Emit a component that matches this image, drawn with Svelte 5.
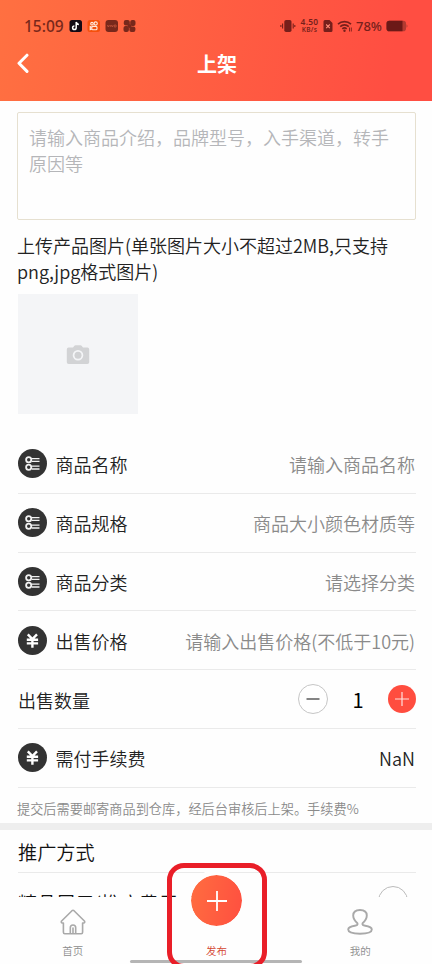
<script>
  let description = '';
  let count = 1;

  const fields = [
    { icon: 'list', label: '商品名称', hint: '请输入商品名称' },
    { icon: 'list', label: '商品规格', hint: '商品大小颜色材质等' },
    { icon: 'list', label: '商品分类', hint: '请选择分类' },
    { icon: 'yen', label: '出售价格', hint: '请输入出售价格(不低于10元)' },
    { label: '出售数量', stepper: true },
    { icon: 'yen', label: '需付手续费', value: 'NaN' },
  ];

  function minus() {
    if (count > 1) count -= 1;
  }
</script>

<div class="page">
  <header>
    <div class="status">
      <span class="time">15:09</span>
      <svg class="apps" width="68" height="14" viewBox="0 0 68 14">
        <rect x="0.5" y="1" width="12.5" height="12" rx="2.5" fill="#120914" />
        <path d="M7.2 3v5.8a1.8 1.8 0 1 1-1.8-1.8M7.2 3c.3 1.6 1.2 2.3 2.7 2.4" fill="none" stroke="#fff" stroke-width="1.5" />
        <rect x="18.5" y="1" width="12.5" height="12" rx="2.5" fill="#f5500c" />
        <g fill="none" stroke="#ffe9dc" stroke-width="1.1">
          <circle cx="23" cy="4.7" r="1.3" />
          <circle cx="26.7" cy="4.5" r="1.6" />
          <rect x="22.8" y="7.4" width="5.2" height="3.4" rx="1" />
          <path d="M22.8 8.3l-1.6-.7v3l1.6-.7" />
        </g>
        <rect x="36.5" y="1" width="12.5" height="12" rx="3" fill="#78281b" />
        <path d="M38.3 6l1 2 1-2M41.3 6v2M42.3 6l1 2 1-2M45.3 6h1.8v2h-1.8z" fill="none" stroke="#c9573c" stroke-width=".7" />
        <g fill="#78281b">
          <rect x="54.8" y="1" width="6" height="5.6" rx="2" />
          <rect x="61.2" y="1" width="5.3" height="6" rx="2" />
          <rect x="54.5" y="7" width="5.4" height="6" rx="2" />
          <rect x="60.4" y="7.5" width="6" height="5.5" rx="2" />
          <circle cx="60.5" cy="7" r="2" />
        </g>
      </svg>
      <div class="indicators">
        <svg width="16" height="14" viewBox="0 0 16 14">
          <rect x="4.3" y="1" width="7.2" height="12" rx="1.8" fill="#761f1b" />
          <path d="M2.6 4.5v5M.9 6v2M13.2 4.5v5M14.8 6v2" stroke="#761f1b" stroke-width="1.1" />
        </svg>
        <span class="speed"><span>4.50</span><span class="unit">KB/s</span></span>
        <svg class="sim" width="10" height="14" viewBox="0 0 10 14">
          <path d="M2 1h4.5L9.5 4v7.5A1.5 1.5 0 0 1 8 13H2A1.5 1.5 0 0 1 .5 11.5v-9A1.5 1.5 0 0 1 2 1z" fill="#761f1b" />
          <path d="M3.2 5.5l3.6 3.6M6.8 5.5L3.2 9.1" stroke="#ff8c78" stroke-width="1.1" />
        </svg>
        <svg class="wifi" width="16" height="14" viewBox="0 0 16 14">
          <g fill="none" stroke="#761f1b" stroke-width="1.6">
            <path d="M1 5.2a9.4 9.4 0 0 1 13 0" />
            <path d="M3.2 7.6a6.2 6.2 0 0 1 8.6 0" />
            <path d="M5.3 9.9a3.2 3.2 0 0 1 4.4 0" />
          </g>
          <circle cx="7.5" cy="11.7" r="1.2" fill="#761f1b" />
          <path d="M12.5 8.5v4M14.3 8.5v4" stroke="#761f1b" stroke-width=".9" />
        </svg>
        <span class="percent">78%</span>
        <svg class="battery" width="22" height="12" viewBox="0 0 22 12">
          <rect x=".5" y=".8" width="19.5" height="10.4" rx="2.8" fill="#b23a31" />
          <path d="M3.3.8H16.5v10.4H3.3A2.8 2.8 0 0 1 .5 8.4V3.6A2.8 2.8 0 0 1 3.3.8z" fill="#6c1917" />
          <path d="M20.5 4.2c1.3.7 1.3 2.9 0 3.6z" fill="#b23a31" />
        </svg>
      </div>
    </div>
    <div class="title-bar">
      <svg class="back" width="14" height="22" viewBox="0 0 14 22">
        <path d="M12 2.2L4 10.2l8 8.2" fill="none" stroke="#fff" stroke-width="3" stroke-linecap="round" stroke-linejoin="round" />
      </svg>
      <h1>上架</h1>
    </div>
  </header>

  <main>
    <textarea bind:value={description} placeholder="请输入商品介绍，品牌型号，入手渠道，转手原因等"></textarea>
    <p class="upload-label">上传产品图片(单张图片大小不超过2MB,只支持png,jpg格式图片)</p>
    <div class="uploader">
      <svg width="24" height="20" viewBox="0 0 24 20">
        <path fill-rule="evenodd" d="M2.6 2.6H7L8.4.7Q8.8.2 9.5.2h5q.7 0 1.1.5L17 2.6h4.4Q23.2 2.6 23.2 4.4v12.9q0 1.8-1.8 1.8H2.6Q.8 19.1.8 17.3V4.4Q.8 2.6 2.6 2.6zM12 4.9a5.3 5.3 0 1 0 0 10.6a5.3 5.3 0 0 0 0-10.6z" fill="#d2d3d5" />
        <circle cx="12" cy="10.2" r="3.5" fill="#d0d1d3" />
      </svg>
    </div>

    <div class="fields">
      {#each fields as field}
        <div class="field">
          {#if field.icon}
            <span class="badge">
              {#if field.icon === 'list'}
                <svg width="29" height="29" viewBox="0 0 29 29" fill="none" stroke="#f2f2f2">
                  <circle cx="10.7" cy="10.8" r="2.6" stroke-width="1.8" />
                  <circle cx="10.7" cy="18.2" r="2.6" stroke-width="1.8" />
                  <path d="M14 9.6h7.5M14 12.4h7.5M14 17.1h7.5M14 20h7.5" stroke-width="1.3" />
                </svg>
              {:else}
                <svg width="29" height="29" viewBox="0 0 29 29" fill="none" stroke="#fff" stroke-width="2.4">
                  <path d="M9.8 8.3l4.6 4.7 4.6-4.7M14.4 12.8v9M8.8 13.7h11.3M8.8 17.4h11.3" />
                </svg>
              {/if}
            </span>
          {/if}
          <span class="label">{field.label}</span>
          {#if field.stepper}
            <div class="stepper">
              <button class="minus" aria-label="minus" on:click={minus}>
                <svg width="14" height="14" viewBox="0 0 14 14"><path d="M.5 7h13" stroke="#333" stroke-width="1.2" /></svg>
              </button>
              <span class="count">{count}</span>
              <button class="plus" aria-label="plus" on:click={() => (count += 1)}>
                <svg width="14" height="14" viewBox="0 0 14 14"><path d="M0 7h14M7 0v14" stroke="#ffe2de" stroke-width="1.2" /></svg>
              </button>
            </div>
          {:else if field.value}
            <span class="value">{field.value}</span>
          {:else}
            <span class="hint">{field.hint}</span>
          {/if}
        </div>
      {/each}
    </div>
    <p class="note">提交后需要邮寄商品到仓库，经后台审核后上架。手续费%</p>
  </main>

  <section>
    <h2>推广方式</h2>
    <div class="option">
      <span>精品展示(推广费用5元)</span>
      <span class="radio"></span>
    </div>
  </section>

  <nav>
    <div class="tab">
      <svg width="28" height="28" viewBox="0 0 28 28" fill="none" stroke="#a9a9a9" stroke-width="1.6" stroke-linecap="round" stroke-linejoin="round">
        <path d="M4.4 15H3.2q-1.5-.6-.6-2L13 2.7q1-.8 2 0L25.4 13q.9 1.4-.6 2h-1.2v9.3q0 1.4-1.4 1.4H5.8q-1.4 0-1.4-1.4z" />
        <path d="M11.3 25.2v-5.5a2.7 2.7 0 0 1 5.4 0v5.5M14 20v5" />
      </svg>
      <span>首页</span>
    </div>
    <div class="tab active">
      <div class="publish">
        <svg width="20" height="20" viewBox="0 0 20 20"><path d="M0 10h20M10 0v20" stroke="#fff" stroke-width="1.8" /></svg>
      </div>
      <span>发布</span>
    </div>
    <div class="tab">
      <svg width="28" height="28" viewBox="0 0 28 28" fill="none" stroke="#a9a9a9" stroke-width="1.9" stroke-linejoin="round">
        <path d="M11.4 15.2C8.3 12.5 7.2 9.8 7.2 7.6C7.2 4 9.7 2 14 2s6.8 2 6.8 5.6c0 2.2-1.1 4.9-4.2 7.6c-.7 1.5.6 2.2 2.6 2.5c4.2.6 6.6 2 6.6 3.9c0 2.7-4.4 4.2-11.8 4.2S2.2 24.3 2.2 21.6c0-1.9 2.4-3.3 6.6-3.9c2-.3 3.3-1 2.6-2.5z" />
      </svg>
      <span>我的</span>
    </div>
    <div class="home-bar"></div>
    <div class="highlight"></div>
  </nav>
</div>

<style>
  :global(body) {
    margin: 0;
    background: #fff;
  }
  .page {
    position: relative;
    width: 432px;
    height: 964px;
    overflow: hidden;
    background: #fefefe;
    color: #222;
    font-family: "Noto Sans CJK SC", sans-serif;
    font-weight: 350;
  }
  h1, h2, p {
    margin: 0;
  }
  svg {
    display: block;
    flex: none;
  }

  header {
    height: 101px;
    box-sizing: border-box;
    padding-top: 14px;
    background: linear-gradient(100deg, #ff7041, #ff4e42 90%);
  }
  .status {
    display: flex;
    align-items: center;
    height: 24px;
    padding: 0 24px;
    color: #78281b;
  }
  .time {
    width: 45px;
    font: 500 15.5px/24px "Noto Sans", sans-serif;
    white-space: nowrap;
  }
  .indicators {
    display: flex;
    align-items: center;
    margin-left: auto;
    color: #761f1b;
  }
  .speed {
    display: flex;
    flex-direction: column;
    width: 21px;
    margin-left: 3px;
    font: 600 8.4px/8px "Noto Sans", sans-serif;
    letter-spacing: 0.3px;
    text-align: center;
  }
  .speed .unit {
    font-size: 6.5px;
    line-height: 8px;
  }
  .sim {
    margin-left: 3px;
  }
  .wifi {
    margin-left: 4px;
  }
  .percent {
    width: 27px;
    margin-left: 3px;
    font: 500 13px/24px "Noto Sans", sans-serif;
  }
  .battery {
    margin-left: 3px;
  }
  .title-bar {
    display: grid;
    grid-template-columns: 40px 1fr 40px;
    align-items: center;
    height: 52px;
  }
  .back {
    margin-left: 15px;
  }
  h1 {
    color: #fff;
    font-size: 20px;
    font-weight: 700;
    line-height: 30px;
    text-align: center;
    padding-left: 2px;
  }

  main {
    padding: 11px 16px 0 17px;
  }
  textarea {
    display: block;
    box-sizing: border-box;
    width: 399px;
    height: 108px;
    padding: 11px 11px;
    border: 1px solid #e6e0d0;
    border-radius: 2px;
    outline: none;
    resize: none;
    background: #fefefe;
    font: inherit;
    font-size: 18px;
    line-height: 26px;
  }
  textarea::placeholder {
    color: #b5b6b9;
    opacity: 1;
  }
  .upload-label {
    margin-top: 12px;
    font-size: 18px;
    line-height: 26px;
  }
  .uploader {
    display: flex;
    align-items: center;
    justify-content: center;
    box-sizing: border-box;
    width: 120px;
    height: 120px;
    margin: 10px 0 0 1px;
    padding-top: 1px;
    background: #f4f5f7;
  }
  .fields {
    margin: 21px 0 0 1px;
  }
  .field {
    display: flex;
    align-items: center;
    box-sizing: border-box;
    height: 58.8px;
    border-bottom: 1px solid #eaeaea;
    font-size: 18px;
    line-height: 28px;
  }
  .badge {
    width: 29px;
    height: 29px;
    margin-right: 8.5px;
    border-radius: 50%;
    background: #333;
  }
  .label {
    padding-top: 1px;
  }
  .hint,
  .value {
    margin-left: auto;
    padding: 1px 1px 0 0;
  }
  .hint {
    color: #8a8a8a;
  }
  .stepper {
    display: flex;
    align-items: center;
    margin-left: auto;
  }
  .stepper button {
    display: flex;
    align-items: center;
    justify-content: center;
    box-sizing: border-box;
    padding: 0;
    border: none;
    border-radius: 50%;
  }
  .stepper .minus {
    width: 30px;
    height: 30px;
    border: 1px solid #c6c6c6;
    background: #fff;
  }
  .stepper .plus {
    width: 28px;
    height: 28px;
    background: #ff4d3f;
  }
  .count {
    width: 60px;
    padding-top: 1px;
    color: #000;
    font-size: 20px;
    font-weight: 400;
    text-align: center;
  }
  .note {
    height: 35.2px;
    color: #8a8a8a;
    font-size: 13.2px;
    line-height: 42px;
    white-space: nowrap;
  }

  section {
    padding: 0 16px 0 18px;
    border-top: 7px solid #eee;
  }
  h2 {
    height: 42px;
    border-bottom: 1px solid #eaeaea;
    color: #111;
    font-size: 19.2px;
    font-weight: 350;
    line-height: 44px;
  }
  .option {
    display: flex;
    justify-content: space-between;
    padding-top: 13px;
    color: #111;
    font-size: 19.2px;
    line-height: 35px;
  }
  .radio {
    width: 28px;
    height: 28px;
    margin-right: 8px;
    border: 1px solid #bbb;
    border-radius: 50%;
  }

  nav {
    position: absolute;
    left: 0;
    right: 0;
    bottom: 0;
    display: flex;
    height: 67px;
    padding-left: 1px;
    background: #fefefe;
  }
  .tab {
    display: flex;
    flex: 1;
    flex-direction: column;
    align-items: center;
    justify-content: flex-end;
    padding-bottom: 5px;
    color: #8d8d8d;
    font-size: 10.5px;
    line-height: 16px;
  }
  .tab > svg {
    margin-bottom: 7px;
  }
  .tab.active {
    color: #d4452f;
  }
  .publish {
    display: flex;
    flex: none;
    align-items: center;
    justify-content: center;
    width: 51px;
    height: 51px;
    margin-bottom: 12px;
    border: 5px solid #fefefe;
    border-radius: 50%;
    background: linear-gradient(100deg, #ff6d40, #ff4f40) padding-box;
  }
  /* marker drawn over the publish tab */
  .highlight {
    position: absolute;
    left: 167px;
    top: -34px;
    box-sizing: border-box;
    width: 100px;
    height: 106px;
    border: 5px solid #e91e28;
    border-radius: 17px;
  }
  .home-bar {
    position: absolute;
    left: 130px;
    bottom: 1px;
    width: 172px;
    height: 3px;
    border-radius: 2px;
    background: #b5b5b5;
  }
</style>
